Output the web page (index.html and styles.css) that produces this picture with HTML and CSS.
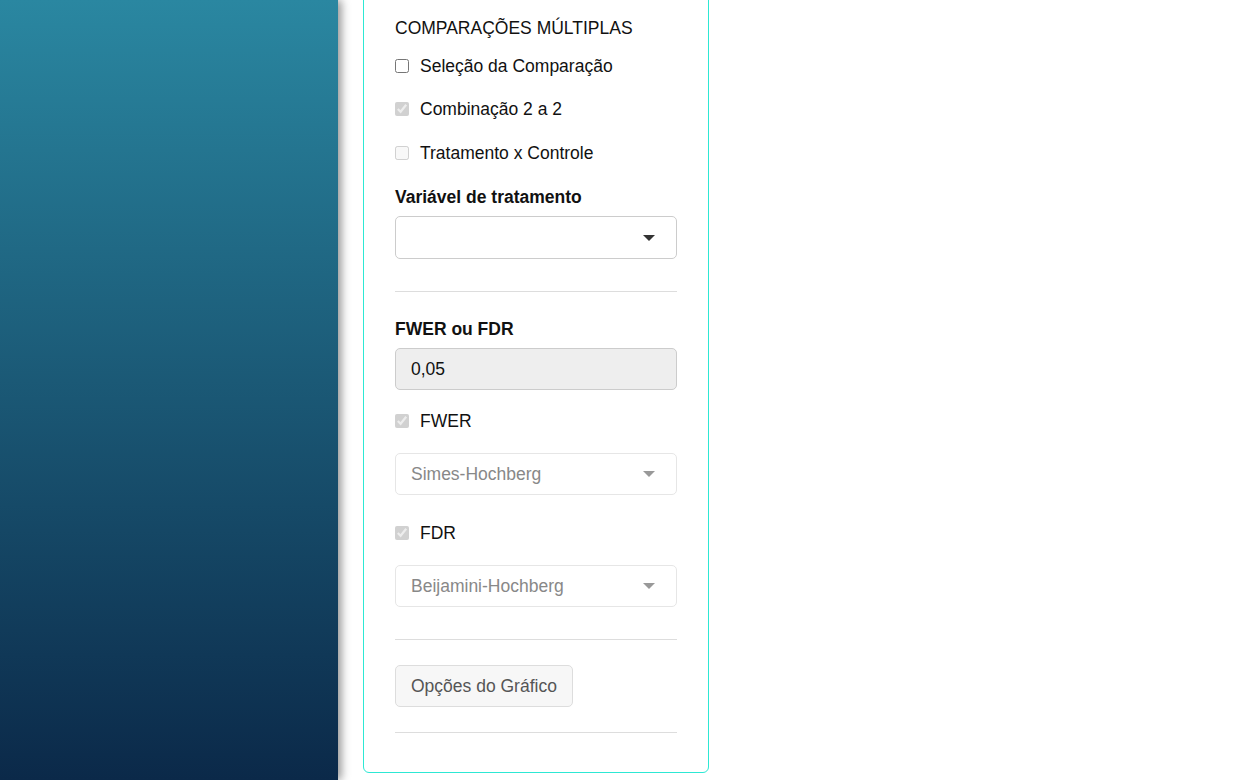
FILE: index.html
```html
<!DOCTYPE html>
<html lang="pt">
<head>
    <meta charset="UTF-8">
    <meta name="viewport" content="width=device-width, initial-scale=1.0">
    <title>Comparações Múltiplas</title>
    <link rel="stylesheet" href="styles.css">
</head>
<body>
    <div class="layout">
        <aside class="sidebar"></aside>
        <main class="main">
            <div class="panel">
                <div class="section-title">COMPARAÇÕES MÚLTIPLAS</div>

                <label class="check first">
                    <input type="checkbox">
                    <span>Seleção da Comparação</span>
                </label>
                <label class="check">
                    <input type="checkbox" checked disabled>
                    <span>Combinação 2 a 2</span>
                </label>
                <label class="check">
                    <input type="checkbox" disabled>
                    <span>Tratamento x Controle</span>
                </label>

                <div class="field-label">Variável de tratamento</div>
                <div class="select select-main">
                    <span class="select-text"></span>
                    <span class="caret"></span>
                </div>

                <hr class="divider">

                <div class="field-label label-after-hr">FWER ou FDR</div>
                <div class="text-input">0,05</div>

                <label class="check after-input">
                    <input type="checkbox" checked disabled>
                    <span>FWER</span>
                </label>
                <div class="select disabled">
                    <span class="select-text">Simes-Hochberg</span>
                    <span class="caret"></span>
                </div>

                <label class="check after-select">
                    <input type="checkbox" checked disabled>
                    <span>FDR</span>
                </label>
                <div class="select disabled">
                    <span class="select-text">Beijamini-Hochberg</span>
                    <span class="caret"></span>
                </div>

                <hr class="divider">

                <button class="btn" type="button">Opções do Gráfico</button>

                <hr class="divider last">
            </div>
        </main>
    </div>
</body>
</html>
```

FILE: styles.css
```css
body {
    margin: 0;
    padding: 0;
    font-family: "Liberation Sans", Arial, sans-serif;
    font-size: 17.5px;
    color: #111;
    background-color: #fff;
    overflow: hidden;
}
.layout {
    display: flex;
    height: 100vh;
}
.sidebar {
    width: 338px;
    flex-shrink: 0;
    background: linear-gradient(to bottom, #2a87a1 0%, #0b2949 100%);
    box-shadow: 3px 0 9px rgba(0, 0, 0, 0.45);
    position: relative;
    z-index: 1;
}
.main {
    padding-left: 25px;
}
.panel {
    width: 282px;
    margin-top: -24px;
    padding: 39px 31px 0 31px;
    border: 1px solid #2de8d4;
    border-radius: 6px;
}
.section-title {
    line-height: 24px;
    height: 24px;
}
.check {
    display: flex;
    align-items: center;
    height: 24px;
    line-height: 24px;
    margin-top: 20px;
}
.check.first {
    margin-top: 14px;
}
.check + .check {
    margin-top: 19px;
}
.check + .check + .check {
    margin-top: 20px;
}
.check input {
    width: 14px;
    height: 14px;
    margin: 0 11px 0 0;
}
.check.after-input {
    margin-top: 19px;
}
.check.after-select {
    margin-top: 26px;
}
.field-label {
    font-weight: bold;
    line-height: 24px;
    height: 24px;
    margin-top: 20px;
}
.field-label.label-after-hr {
    margin-top: 25px;
}
.select {
    box-sizing: border-box;
    height: 42px;
    margin-top: 20px;
    padding: 0 21px 0 15px;
    border: 1px solid #ccc;
    border-radius: 5px;
    display: flex;
    align-items: center;
    justify-content: space-between;
    background-color: #fff;
}
.select-main {
    height: 43px;
    margin-top: 7px;
}
.select.disabled {
    border-color: #e6e6e6;
    color: #888;
}
.caret {
    width: 0;
    height: 0;
    border-left: 6px solid transparent;
    border-right: 6px solid transparent;
    border-top: 6px solid #333;
}
.select.disabled .caret {
    border-top-color: #999;
}
.divider {
    border: 0;
    border-top: 1px solid #ddd;
    margin: 32px 0 0 0;
    height: 0;
}
.divider.last {
    margin-top: 25px;
    margin-bottom: 39px;
}
.text-input {
    box-sizing: border-box;
    height: 42px;
    margin-top: 7px;
    padding: 0 15px;
    border: 1px solid #ccc;
    border-radius: 5px;
    background-color: #eee;
    display: flex;
    align-items: center;
}
.btn {
    display: block;
    box-sizing: border-box;
    height: 42px;
    margin-top: 25px;
    padding: 0 15px;
    font-family: inherit;
    font-size: 17.5px;
    color: #555;
    background-color: #f7f7f7;
    border: 1px solid #ddd;
    border-radius: 5px;
}
```
